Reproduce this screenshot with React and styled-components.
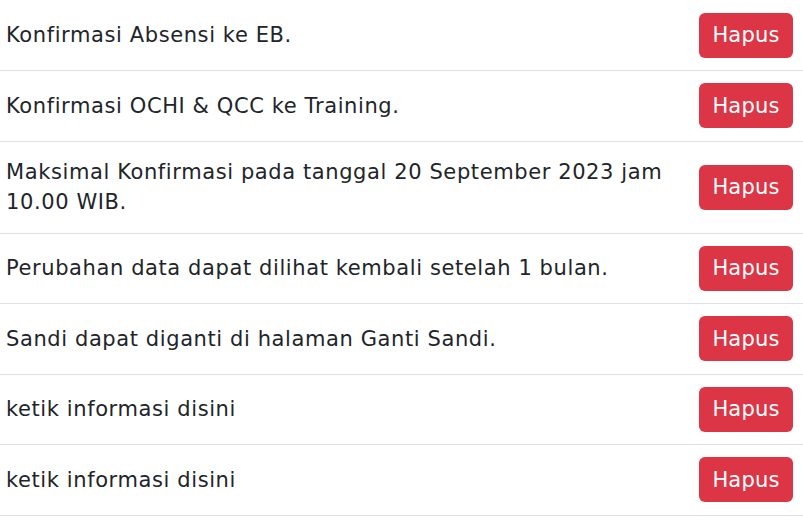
import React from 'react';
import styled, { createGlobalStyle } from 'styled-components';

const GlobalStyle = createGlobalStyle`
  body {
    margin: 0;
    background: #fff;
    font-family: "DejaVu Sans", "Noto Sans", sans-serif;
    color: #212529;
  }
`

const List = styled.div`
  display: flex;
  flex-direction: column;
  width: 803px;
  padding-top: 0.5px;
`

const Row = styled.div`
  display: flex;
  align-items: center;
  border-bottom: 1px solid #dee2e6;
`

const Text = styled.div`
  flex: 1;
  padding: 15.5px 8px 15.5px 6px;
  font-size: 21px;
  line-height: 30px;
  letter-spacing: 0.6px;
`

const Action = styled.div`
  padding: 12.25px 10px 12.25px 0;
`

const DeleteButton = styled.button`
  display: block;
  width: 94px;
  height: 45px;
  padding: 0;
  border: none;
  border-radius: 6px;
  background: #dc3545;
  color: #fff;
  font-family: inherit;
  font-size: 21px;
  letter-spacing: 0.2px;
  cursor: pointer;
`

const items = [
  'Konfirmasi Absensi ke EB.',
  'Konfirmasi OCHI & QCC ke Training.',
  'Maksimal Konfirmasi pada tanggal 20 September 2023 jam 10.00 WIB.',
  'Perubahan data dapat dilihat kembali setelah 1 bulan.',
  'Sandi dapat diganti di halaman Ganti Sandi.',
  'ketik informasi disini',
  'ketik informasi disini',
];

export default function App() {
  return (
    <>
      <GlobalStyle />
      <List>
        {items.map((item, i) => (
          <Row key={i}>
            <Text>{item}</Text>
            <Action>
              <DeleteButton>Hapus</DeleteButton>
            </Action>
          </Row>
        ))}
      </List>
    </>
  );
}
